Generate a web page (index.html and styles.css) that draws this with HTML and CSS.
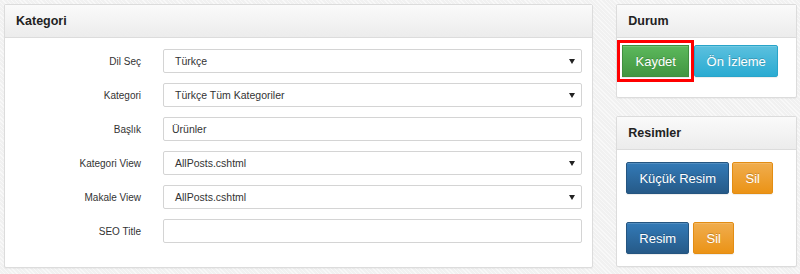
FILE: index.html
```html
<!DOCTYPE html>
<html>

<head>
  <title>Kategori</title>
  <link rel="stylesheet" href="styles.css">
</head>

<body>
  <div class="page">
    <div class="panel main-panel">
      <div class="panel-heading">Kategori</div>
      <div class="panel-body form">
        <div class="form-row">
          <label>Dil Seç</label>
          <div class="select"><span>Türkçe</span><i class="caret"></i></div>
        </div>
        <div class="form-row">
          <label>Kategori</label>
          <div class="select"><span>Türkçe Tüm Kategoriler</span><i class="caret"></i></div>
        </div>
        <div class="form-row">
          <label>Başlık</label>
          <div class="input">Ürünler</div>
        </div>
        <div class="form-row">
          <label>Kategori View</label>
          <div class="select"><span>AllPosts.cshtml</span><i class="caret"></i></div>
        </div>
        <div class="form-row">
          <label>Makale View</label>
          <div class="select"><span>AllPosts.cshtml</span><i class="caret"></i></div>
        </div>
        <div class="form-row">
          <label>SEO Title</label>
          <div class="input"></div>
        </div>
      </div>
    </div>

    <div class="side">
      <div class="panel durum-panel">
        <div class="panel-heading">Durum</div>
        <div class="panel-body durum-body">
          <button class="btn btn-success marked">Kaydet</button>
          <button class="btn btn-info">Ön İzleme</button>
        </div>
      </div>

      <div class="panel resim-panel">
        <div class="panel-heading">Resimler</div>
        <div class="panel-body resim-body">
          <div class="btn-row">
            <button class="btn btn-primary wide">Küçük Resim</button>
            <button class="btn btn-warning">Sil</button>
          </div>
          <div class="btn-row">
            <button class="btn btn-primary">Resim</button>
            <button class="btn btn-warning">Sil</button>
          </div>
        </div>
      </div>
    </div>
  </div>
</body>

</html>
```

FILE: styles.css
```css
body {
  margin: 0;
  font-family: "Liberation Sans", Arial, sans-serif;
  color: #333;
  background-color: #f1f1f1;
  background-image: repeating-linear-gradient(45deg, rgba(255, 255, 255, 0.5) 0 1px, transparent 1px 3px);
}

.page {
  display: flex;
  padding: 4px 3px 0 4px;
  gap: 23px;
  height: 270px;
}

.panel {
  background-color: #fff;
  border: 1px solid #dcdcdc;
  border-radius: 2px;
  box-shadow: 0 1px 1px rgba(0, 0, 0, 0.04);
}

.panel-heading {
  height: 32px;
  line-height: 33px;
  padding: 0 11px;
  font-size: 12.5px;
  font-weight: bold;
  color: #222;
  background: linear-gradient(to bottom, #fafafa, #ececec);
  border-bottom: 1px solid #dcdcdc;
}

.main-panel {
  width: 588px;
  height: 262px;
}

.form {
  padding: 11px 10px 0 0;
}

.form-row {
  display: flex;
  align-items: center;
  margin-bottom: 10px;
}

.form-row label {
  width: 136px;
  margin-right: 22px;
  text-align: right;
  font-size: 10px;
  color: #333;
}

.select,
.input {
  display: flex;
  align-items: center;
  box-sizing: border-box;
  width: 419px;
  height: 24px;
  border: 1px solid #d4d4d4;
  border-radius: 2px;
  font-size: 10.5px;
  color: #333;
  background: #fff;
}

.select {
  padding: 0 6px 0 11px;
  justify-content: space-between;
}

.input {
  padding: 0 8px;
}

.caret {
  width: 0;
  height: 0;
  border-left: 3px solid transparent;
  border-right: 3px solid transparent;
  border-top: 5px solid #222;
}

.side {
  width: 181px;
  display: flex;
  flex-direction: column;
  gap: 18px;
}

.durum-panel {
  height: 92px;
}

.durum-body {
  display: flex;
  padding: 7px 5px 0 5px;
}

.resim-panel {
  height: 149px;
}

.resim-body {
  padding: 12px 9px 0 9px;
}

.btn-row {
  display: flex;
  gap: 3px;
  margin-bottom: 28px;
}

.btn-row + .btn-row .btn-warning {
  margin-left: 1px;
}

.btn {
  height: 32px;
  padding: 0;
  white-space: nowrap;
  font-family: "Liberation Sans", Arial, sans-serif;
  font-size: 13px;
  color: #fff;
  border: 1px solid transparent;
  border-radius: 2px;
  text-shadow: 0 -1px 0 rgba(0, 0, 0, 0.2);
  box-shadow: inset 0 1px 0 rgba(255, 255, 255, 0.15), 0 1px 1px rgba(0, 0, 0, 0.075);
  cursor: pointer;
}

.btn-success {
  width: 67px;
  background: linear-gradient(to bottom, #5cb85c, #419641);
  border-color: #3e8f3e;
}

.btn-info {
  width: 84px;
  margin-left: 5px;
  background: linear-gradient(to bottom, #5bc0de, #2aabd2);
  border-color: #28a4c9;
}

.btn-primary {
  width: 63px;
  background: linear-gradient(to bottom, #337ab7, #265a88);
  border-color: #245580;
}

.btn-primary.wide {
  width: 103px;
}

.btn-warning {
  width: 41px;
  background: linear-gradient(to bottom, #f0ad4e, #eb9316);
  border-color: #e38d13;
}

.marked {
  border-radius: 0;
  outline: 3px solid #f00;
  outline-offset: 2px;
}
```
